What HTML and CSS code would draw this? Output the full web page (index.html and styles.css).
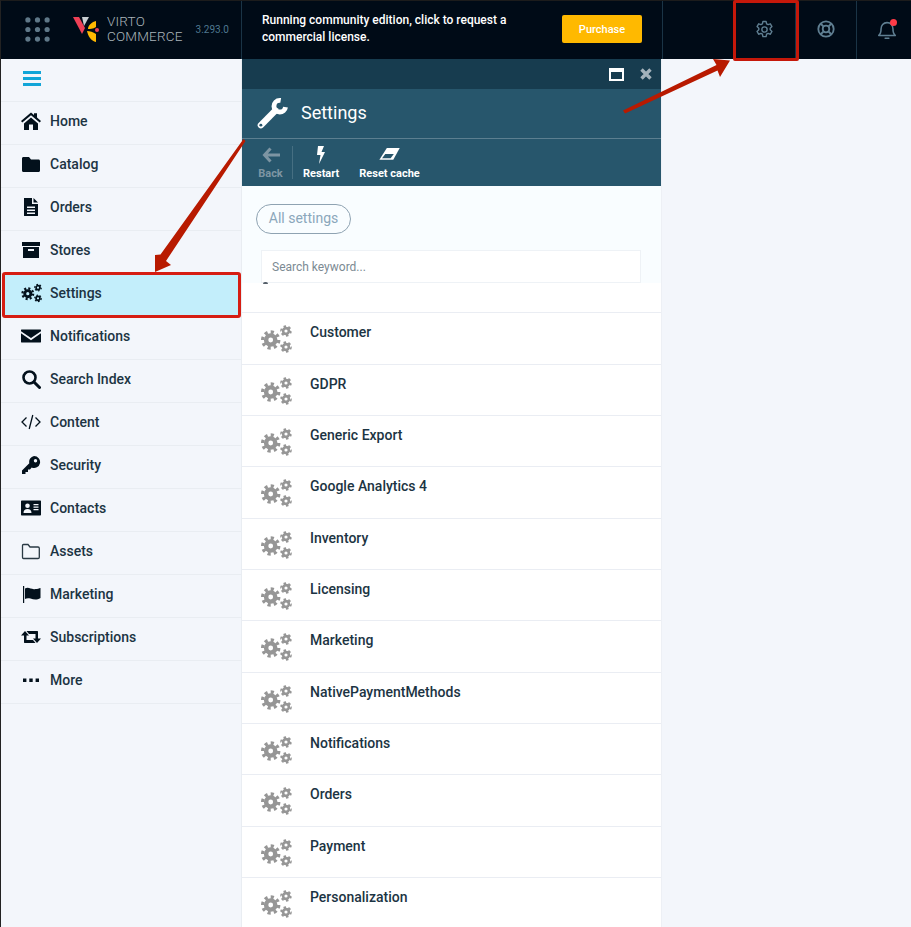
FILE: index.html
```html
<!DOCTYPE html>
<html lang="en">
<head>
<meta charset="utf-8">
<title>Virto Commerce Settings</title>
<link rel="stylesheet" href="styles.css">
</head>
<body>
<svg class="defs" width="0" height="0" aria-hidden="true">
  <symbol id="cogs" viewBox="0 0 32 30">
    <g fill="none" stroke="currentColor">
      <circle cx="9.700" cy="16" r="4.600" stroke-width="4.400"/>
      <circle cx="9.700" cy="16" r="8" stroke-width="3.400" pathLength="16" stroke-dasharray="1 1"/>
      <circle cx="25" cy="7" r="2.900" stroke-width="2.600"/>
      <circle cx="25" cy="7" r="4.800" stroke-width="2" pathLength="12" stroke-dasharray="1 1"/>
      <circle cx="25" cy="23" r="2.900" stroke-width="2.600"/>
      <circle cx="25" cy="23" r="4.800" stroke-width="2" pathLength="12" stroke-dasharray="1 1"/>
    </g>
  </symbol>
</svg>

<header class="topbar">
  <div class="brand">
    <svg class="apps" viewBox="0 0 26 26" aria-hidden="true">
      <g fill="#5f7888">
        <circle cx="3" cy="3" r="2.700"/><circle cx="13" cy="3" r="2.700"/><circle cx="23" cy="3" r="2.700"/>
        <circle cx="3" cy="13" r="2.700"/><circle cx="13" cy="13" r="2.700"/><circle cx="23" cy="13" r="2.700"/>
        <circle cx="3" cy="23" r="2.700"/><circle cx="13" cy="23" r="2.700"/><circle cx="23" cy="23" r="2.700"/>
      </g>
    </svg>
    <svg class="logo" viewBox="0 0 26 27" aria-hidden="true">
      <path d="M0 1h6l6 11-3 6z" fill="#ef4056"/>
      <path d="M9 1h7l-5 9z" fill="#c9ced2"/>
      <path d="M23 5v6c-3 2-6 2-8 2 0-4 4-7 8-8z" fill="#ffb900"/>
      <path d="M14 15c3 0 6 1 9 3v8c-5-1-8-6-9-11z" fill="#ffb900"/>
      <circle cx="24" cy="14" r="2" fill="#ef4056"/>
    </svg>
    <div class="wordmark">VIRTO<br>COMMERCE</div>
    <div class="version">3.293.0</div>
  </div>
  <div class="notice">
    <p class="notice-text">Running community edition, click to request a commercial license.</p>
    <button class="purchase">Purchase</button>
  </div>
  <div class="spacer"></div>
  <div class="tool tool-gear">
    <svg class="tool-icon" viewBox="0 0 24 24" fill="none" stroke="#5f7f92" stroke-width="1.600" stroke-linejoin="round" aria-hidden="true">
      <circle cx="12" cy="12" r="3"/>
      <path d="M10.200 2.800h3.600l.6 2.700 1.700.9 2.600-.9 1.800 3.100-2 1.900v1.900l2 1.900-1.800 3.100-2.600-.9-1.700.9-.6 2.700h-3.600l-.6-2.700-1.700-.9-2.600.9-1.800-3.100 2-1.900v-1.900l-2-1.900 1.800-3.100 2.600.9 1.700-.9z"/>
    </svg>
    <span class="tool-mark"></span>
  </div>
  <div class="tool tool-help">
    <svg class="tool-icon" viewBox="0 0 24 24" fill="none" stroke="#5f7f92" stroke-width="2" aria-hidden="true">
      <circle cx="12" cy="12" r="8.400"/>
      <circle cx="12" cy="12" r="3.600"/>
      <path d="M6 6l3.400 3.400M18 6l-3.400 3.400M6 18l3.400-3.400M18 18l-3.400-3.400" stroke-width="2.200"/>
    </svg>
  </div>
  <div class="tool tool-bell">
    <svg class="tool-icon" viewBox="0 0 24 24" fill="none" stroke="#5f7f92" stroke-width="1.700" aria-hidden="true">
      <path d="M3 18.500c2-1.500 2.500-3.500 2.500-7 0-4 2.500-7 6.500-7s6.500 3 6.500 7c0 3.500.5 5.500 2.500 7z" stroke-linejoin="round"/>
      <path d="M10 21.500h4" stroke-linecap="round"/>
    </svg>
    <span class="bell-dot"></span>
  </div>
</header>

<div class="workspace">
  <nav class="sidebar">
    <div class="nav-head">
      <svg class="burger" viewBox="0 0 18 15" aria-hidden="true"><path d="M0 1.500h18M0 7.500h18M0 13.500h18" stroke="#12a5d8" stroke-width="2.800"/></svg>
    </div>
    <a class="nav-item"><svg class="nav-icon" viewBox="0 0 20 20" aria-hidden="true"><path d="M10 1.500l3 2.600V2.300h3v4.300l4 3.500-1.300 1.500L10 4.300 1.300 11.600 0 10.100zM3 12.500L10 6.500l7 6v6.500h-5v-5.500H8V19H3z"/></svg><span>Home</span></a>
    <a class="nav-item"><svg class="nav-icon" viewBox="0 0 20 20" aria-hidden="true"><path d="M1 4.500C1 3.500 1.700 3 2.500 3H8l2 2.500h7.500c.9 0 1.500.6 1.500 1.500v9.500c0 .9-.6 1.500-1.500 1.500h-15C1.600 18 1 17.400 1 16.500z"/></svg><span>Catalog</span></a>
    <a class="nav-item"><svg class="nav-icon" viewBox="0 0 20 20" aria-hidden="true"><path fill-rule="evenodd" d="M3 1h8v6h6v11.500c0 .5-.4.500-1 .500H4c-.6 0-1 0-1-.5zM6 9.500v1.500h8V9.500zM6 12.500V14h8v-1.500zM6 15.500V17h8v-1.500z"/><path d="M12.500 1l4.500 4.500h-4.500z"/></svg><span>Orders</span></a>
    <a class="nav-item"><svg class="nav-icon" viewBox="0 0 20 20" aria-hidden="true"><path fill-rule="evenodd" d="M1 2h18v4H1zM2 7h16v11H2zM7 9v2h6V9z"/></svg><span>Stores</span></a>
    <a class="nav-item nav-active"><svg class="nav-icon nav-cogs" aria-hidden="true"><use href="#cogs"/></svg><span>Settings</span></a>
    <a class="nav-item"><svg class="nav-icon" viewBox="0 0 20 20" aria-hidden="true"><path d="M.5 3.500h19c.3 0 .5.200.5.500v1.200L10 12 0 5.200V4c0-.3.200-.5.500-.5zM0 7.300l10 6.900 10-6.900V16c0 .3-.2.500-.5.500H.5C.2 16.500 0 16.300 0 16z"/></svg><span>Notifications</span></a>
    <a class="nav-item"><svg class="nav-icon nav-line" viewBox="0 0 20 20" aria-hidden="true"><circle cx="8.500" cy="8.500" r="6" stroke-width="2.600"/><path d="M13 13l5.500 5.500" stroke-width="3" stroke-linecap="round"/></svg><span>Search Index</span></a>
    <a class="nav-item"><svg class="nav-icon nav-line" viewBox="0 0 20 20" stroke-width="1.300" aria-hidden="true"><path d="M5.500 5.500L1 10l4.500 4.500M14.500 5.500L19 10l-4.500 4.500M11.800 3L8.200 17"/></svg><span>Content</span></a>
    <a class="nav-item"><svg class="nav-icon" viewBox="0 0 20 20" aria-hidden="true"><path fill-rule="evenodd" d="M13 1a6 6 0 1 1-2.300 11.500L9 14.500H7v2.500H4.500v2H1v-3.500l7.300-7.300A6 6 0 0 1 13 1zm1.500 3a1.700 1.700 0 1 0 0 3.400 1.700 1.700 0 0 0 0-3.400z"/></svg><span>Security</span></a>
    <a class="nav-item"><svg class="nav-icon" viewBox="0 0 20 20" aria-hidden="true"><path fill-rule="evenodd" d="M1 2.500h18c.6 0 1 .4 1 1v13c0 .6-.4 1-1 1H1c-.6 0-1-.4-1-1v-13c0-.6.400-1 1-1zm5.500 3a2.300 2.300 0 1 0 0 4.600 2.300 2.300 0 0 0 0-4.600zM2.500 15h8c0-2.500-1.500-3.900-4-3.900s-4 1.400-4 3.900zM12.500 6v1.200h5V6zM12.500 8.500v1.200h5V8.500zM12.500 11v1.200h5V11z"/></svg><span>Contacts</span></a>
    <a class="nav-item"><svg class="nav-icon nav-line nav-thin" viewBox="0 0 20 20" stroke-width="1.300" aria-hidden="true"><path d="M1.500 4.500c0-.6.400-1 1-1H7l2 2.500h8c.8 0 1.300.5 1.300 1.300v9c0 .7-.5 1.200-1.300 1.200H2.500c-.6 0-1-.5-1-1.200z"/></svg><span>Assets</span></a>
    <a class="nav-item"><svg class="nav-icon" viewBox="0 0 20 20" aria-hidden="true"><path d="M2 2h1.200v17H2z"/><path d="M4 4.500c4-2 6 1.500 10.500.5 2 0 3.500-.5 5-1v10c-4 2.500-7 1.500-10 .5-2-.5-4-.5-5.500.5z"/></svg><span>Marketing</span></a>
    <a class="nav-item"><svg class="nav-icon" viewBox="0 0 20 20" aria-hidden="true"><path d="M4 4l4 4.500H5.500V13H12l2.500 3H4c-.8 0-1-.4-1-1V8.500H0zM16 16l-4-4.500h2.500V7H8L5.500 4H16c.8 0 1 .4 1 1v6.500h3z"/></svg><span>Subscriptions</span></a>
    <a class="nav-item"><svg class="nav-icon" viewBox="0 0 20 20" aria-hidden="true"><path d="M2 8.500h3.400V12H2zM8.300 8.500h3.400V12H8.300zM14.600 8.500H18V12h-3.400z"/></svg><span>More</span></a>
  </nav>

  <section class="blade">
    <div class="blade-bar">
      <svg class="win-icon" viewBox="0 0 15 13" aria-hidden="true"><path fill-rule="evenodd" d="M0 0h15v13H0zM2 4v7h11V4z" fill="#fff"/></svg>
      <svg class="close-icon" viewBox="0 0 12 12" aria-hidden="true"><path d="M1.500 1.500l9 9M10.500 1.500l-9 9" stroke="#a3b2bb" stroke-width="3.400"/></svg>
    </div>
    <div class="blade-title">
      <svg class="wrench" viewBox="0 0 34 34" aria-hidden="true">
        <path d="M5 29L20 14" stroke="#fff" stroke-width="6.500" stroke-linecap="round"/>
        <circle cx="24.500" cy="9.500" r="6" fill="none" stroke="#fff" stroke-width="5" pathLength="360" stroke-dasharray="270 90" stroke-dashoffset="-10"/>
        <circle cx="5" cy="29" r="1.500" fill="#27566c"/>
      </svg>
      <h1>Settings</h1>
    </div>
    <div class="toolbar">
      <div class="tb-btn tb-off">
        <svg class="tb-icon" viewBox="0 0 18 18" aria-hidden="true"><path d="M8.500 2.500L2.500 9l6 6.500M3 9h15" fill="none" stroke="#7d95a3" stroke-width="3"/></svg>
        <span>Back</span>
      </div>
      <div class="tb-sep"></div>
      <div class="tb-btn">
        <svg class="tb-icon" viewBox="0 0 18 18" aria-hidden="true"><path d="M6 0h6L9.500 6H13L7 18l1.500-9H5z" fill="#fff"/></svg>
        <span>Restart</span>
      </div>
      <div class="tb-btn">
        <svg class="tb-icon tb-eraser" viewBox="0 0 20 14" aria-hidden="true"><path d="M8 1h12l-6 11H1z" fill="#fff"/><path d="M6.500 6.500h8l-3 4H3.500z" fill="#27566c"/></svg>
        <span>Reset cache</span>
      </div>
    </div>
    <div class="blade-filter">
      <span class="pill">All settings</span>
      <div class="search">Search keyword...<i class="speck"></i></div>
    </div>
    <ul class="list">
      <li class="list-gap"></li>
      <li class="row"><svg class="row-icon"><use href="#cogs"/></svg><span>Customer</span></li>
      <li class="row"><svg class="row-icon"><use href="#cogs"/></svg><span>GDPR</span></li>
      <li class="row"><svg class="row-icon"><use href="#cogs"/></svg><span>Generic Export</span></li>
      <li class="row"><svg class="row-icon"><use href="#cogs"/></svg><span>Google Analytics 4</span></li>
      <li class="row"><svg class="row-icon"><use href="#cogs"/></svg><span>Inventory</span></li>
      <li class="row"><svg class="row-icon"><use href="#cogs"/></svg><span>Licensing</span></li>
      <li class="row"><svg class="row-icon"><use href="#cogs"/></svg><span>Marketing</span></li>
      <li class="row"><svg class="row-icon"><use href="#cogs"/></svg><span>NativePaymentMethods</span></li>
      <li class="row"><svg class="row-icon"><use href="#cogs"/></svg><span>Notifications</span></li>
      <li class="row"><svg class="row-icon"><use href="#cogs"/></svg><span>Orders</span></li>
      <li class="row"><svg class="row-icon"><use href="#cogs"/></svg><span>Payment</span></li>
      <li class="row"><svg class="row-icon"><use href="#cogs"/></svg><span>Personalization</span></li>
    </ul>
  </section>
</div>

<svg class="arrows" viewBox="0 0 911 927" aria-hidden="true">
  <polygon points="623,110.500 716.500,65 713,59 730,60.500 720,77 717.500,70.500 625,113.500" fill="#b81a00"/>
  <polygon points="243.500,139 160.500,254.500 155,255 155,272 171,265 166,261 245.500,141" fill="#b81a00"/>
</svg>
</body>
</html>
```
FILE: styles.css
```css
* { box-sizing: border-box; }
html, body { margin: 0; padding: 0; }
body {
  position: relative;
  width: 911px;
  height: 927px;
  overflow: hidden;
  background: #f3f6fb;
  font-family: Roboto, "Liberation Sans", sans-serif;
  color: #1c3443;
}
.defs { position: absolute; }

.topbar {
  display: flex;
  height: 59px;
  background: #000b17;
  border-top: 1px solid #1c1c1c;
  border-left: 1px solid #222;
}
.brand {
  display: flex;
  align-items: center;
  width: 241px;
  flex: none;
  padding-bottom: 2px;
  border-right: 1px solid #1a3446;
}
.apps { width: 25px; height: 25px; margin-left: 24px; flex: none; }
.logo { width: 26px; height: 27px; margin-left: 23px; flex: none; }
.wordmark {
  margin-left: 8px;
  font-size: 13.500px;
  font-weight: 300;
  line-height: 15px;
  letter-spacing: .2px;
  color: #aab4ba;
}
.version { margin-left: 13px; font-size: 10px; color: #4f7890; }

.notice {
  display: flex;
  align-items: center;
  width: 421px;
  flex: none;
  padding-left: 20px;
  padding-bottom: 2px;
  border-right: 1px solid #1a3446;
}
.notice-text {
  width: 280px;
  margin: 0 20px 0 0;
  font-size: 12px;
  font-weight: 500;
  line-height: 17px;
  color: #fff;
}
.purchase {
  width: 80px;
  height: 28px;
  border: 0;
  border-radius: 2px;
  background: #ffb900;
  color: #fff;
  font: 500 11px Roboto, sans-serif;
}
.spacer { width: 70px; flex: none; }
.tool {
  position: relative;
  display: flex;
  align-items: center;
  justify-content: center;
  flex: none;
  width: 61px;
  padding-bottom: 2px;
  border-right: 1px solid #1a3446;
}
.tool-gear { width: 63px; }
.tool-help { width: 61px; }
.tool-bell { flex: 1; border-right: 0; padding-left: 6px; }
.tool-icon { width: 21px; height: 21px; }
.tool-help .tool-icon { width: 22px; height: 22px; }
.tool-bell .tool-icon { width: 22px; height: 23px; }
.tool-mark {
  position: absolute;
  left: 0;
  top: -1px;
  width: 66px;
  height: 61px;
  border: 3px solid #c5180a;
  border-radius: 2px;
}
.bell-dot {
  position: absolute;
  left: 33px;
  top: 18px;
  width: 7px;
  height: 7px;
  border-radius: 50%;
  background: #ff3b47;
}

.workspace { display: flex; height: 868px; }

.sidebar {
  width: 242px;
  flex: none;
  background: #f3f6fb;
  border-left: 1px solid #222;
  border-right: 1px solid #e9edf2;
}
.nav-head {
  display: flex;
  align-items: center;
  height: 43px;
  padding: 0 0 3px 22px;
  border-bottom: 1px solid #e9edf2;
}
.burger { width: 18px; height: 15px; }
.nav-item {
  position: relative;
  display: flex;
  align-items: center;
  gap: 9px;
  height: 43px;
  padding: 0 0 4px 20px;
  border-bottom: 1px solid #e9edf2;
  font-size: 14px;
  font-weight: 500;
  color: #1c3443;
}
.nav-icon { width: 20px; height: 20px; fill: #03111c; color: #03111c; flex: none; }
.nav-line { fill: none; stroke: #03111c; }
.nav-thin { stroke: #2a3a44; }
.nav-cogs { width: 22px; height: 20px; margin-right: -2px; }
.nav-active {
  height: 44px;
  background: #c3eefb;
  outline: 3px solid #d61d12;
  outline-offset: -2px;
  border-bottom: 0;
  border-radius: 2px;
  margin: -1px 1px 0 2px;
  padding: 0 0 4px 18px;
}

.blade {
  width: 420px;
  flex: none;
  background: #fff;
  border-right: 1px solid #edf0f5;
}
.blade-bar {
  display: flex;
  align-items: center;
  justify-content: flex-end;
  gap: 16px;
  height: 30px;
  padding-right: 9px;
  background: #173c4f;
}
.win-icon { width: 15px; height: 13px; }
.close-icon { width: 12px; height: 12px; }
.blade-title {
  display: flex;
  align-items: center;
  gap: 12px;
  height: 50px;
  padding-left: 14px;
  background: #27566c;
  border-bottom: 1px solid #5c7f90;
}
.wrench { width: 33px; height: 33px; }
.blade-title h1 {
  margin: 0 0 2px;
  font-size: 18px;
  font-weight: 400;
  color: #fff;
}
.toolbar {
  display: flex;
  align-items: center;
  height: 47px;
  padding-left: 16px;
  background: #27566c;
}
.tb-btn {
  display: flex;
  flex-direction: column;
  align-items: center;
  gap: 3px;
  font-size: 11px;
  font-weight: 700;
  color: #fff;
}
.tb-off { color: #7d95a3; width: 25px; }
.tb-btn:nth-child(3) { margin-left: 10px; }
.tb-btn:nth-child(4) { margin-left: 20px; }
.tb-sep { width: 1px; height: 33px; margin-left: 9px; background: #466f82; }
.tb-icon { width: 18px; height: 18px; }
.tb-eraser { width: 22px; height: 15px; margin: 1px 0 2px -2px; }

.blade-filter {
  height: 97px;
  padding: 18px 0 0 14px;
  background: #f9fdff;
}
.pill {
  display: inline-block;
  width: 95px;
  height: 30px;
  border: 1px solid #8fa3b2;
  border-radius: 15px;
  font-size: 14px;
  line-height: 27px;
  text-align: center;
  color: #8ba7bb;
}
.search {
  position: relative;
  width: 380px;
  height: 33px;
  margin: 16px 0 0 5px;
  padding-left: 10px;
  background: #fff;
  border: 1px solid #eef2f6;
  font-size: 12px;
  line-height: 33px;
  color: #7c8a93;
}
.speck {
  position: absolute;
  left: 1px;
  top: 31px;
  width: 5px;
  height: 2px;
  background: #55606a;
  border-radius: 2px 2px 0 0;
}

.list { margin: 0; padding: 0; list-style: none; }
.list-gap { height: 29.300px; }
.row {
  display: flex;
  align-items: flex-start;
  height: 51.330px;
  border-top: 1px solid #eaedf3;
  font-size: 14px;
  font-weight: 500;
  color: #1c3443;
}
.row span { margin-top: 11px; }
.row-icon {
  width: 32px;
  height: 30px;
  margin: 11px 17px 0 19px;
  color: #969696;
  flex: none;
}

.arrows {
  position: absolute;
  left: 0;
  top: 0;
  width: 911px;
  height: 927px;
  pointer-events: none;
}
```
